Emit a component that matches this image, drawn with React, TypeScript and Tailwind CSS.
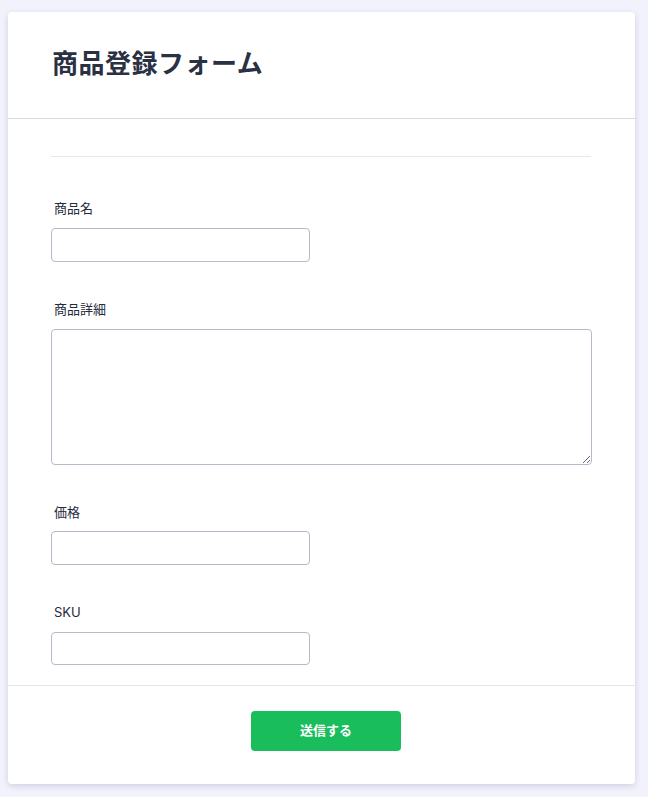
export default function App() {
    const font = { fontFamily: 'Inter, "Noto Sans CJK JP", sans-serif' };
    return (
        <div className="min-h-[797px] bg-[#f1f2fb] pt-3 px-2" style={font}>
            <div className="w-[627px] bg-white rounded shadow-[0_2px_6px_rgba(60,60,110,0.18)]">
                {/* Header */}
                <div className="h-[107px] flex items-center px-[44px] border-b border-[#d9d9e6]">
                    <h1 className="text-[26px] font-bold text-[#2a3142] tracking-[0.5px] -mt-[3px]">
                        商品登録フォーム
                    </h1>
                </div>

                {/* Body */}
                <div className="px-[43px] pt-[37px] pb-[20px]">
                    <div className="border-t border-[#e6e6ec] mr-px" />

                    <div className="mt-[41px]">
                        <label className="block pl-[3px] text-[13px] leading-5 text-[#252b3b] mb-[10px]">商品名</label>
                        <input className="block w-[259px] h-[34px] border border-[#b9b9c9] rounded-[4px] bg-white" />
                    </div>

                    <div className="mt-[37px]">
                        <label className="block pl-[3px] text-[13px] leading-5 text-[#252b3b] mb-[10px]">商品詳細</label>
                        <textarea className="block w-[541px] h-[136px] border border-[#b9b9c9] rounded-[4px] bg-white" />
                    </div>

                    <div className="mt-[37px]">
                        <label className="block pl-[3px] text-[13px] leading-5 text-[#252b3b] mb-[9px]">価格</label>
                        <input className="block w-[259px] h-[34px] border border-[#b9b9c9] rounded-[4px] bg-white" />
                    </div>

                    <div className="mt-[37px]">
                        <label className="block pl-[3px] text-[13px] leading-5 text-[#252b3b] mb-[10px]">SKU</label>
                        <input className="block w-[259px] h-[33px] border border-[#b9b9c9] rounded-[4px] bg-white" />
                    </div>
                </div>

                {/* Footer */}
                <div className="border-t border-[#e3e3ef] pt-[25px] pb-[33px] flex justify-center pl-[9px]">
                    <button className="w-[150px] h-[40px] rounded-[4px] bg-[#19bd5c] text-white text-[13px] font-bold">
                        送信する
                    </button>
                </div>
            </div>
        </div>
    );
}
